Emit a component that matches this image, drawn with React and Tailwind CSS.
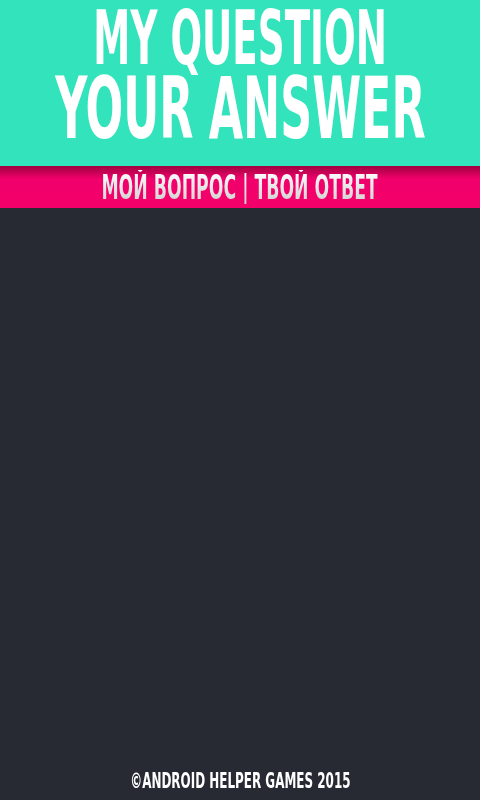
import React from 'react';

const condensed = { fontFamily: '"DejaVu Sans Condensed", "Liberation Sans", sans-serif' };

const App = () => {
  return (
    <div className="w-[480px] h-[800px] flex flex-col bg-[#272a33] overflow-hidden" style={condensed}>
      {/* title block */}
      <div className="h-[166px] bg-[#33e3bb] flex flex-col items-center text-white font-bold uppercase">
        <div className="text-[74px] leading-none mt-[1px] scale-x-[0.56] whitespace-nowrap">My Question</div>
        <div className="text-[85px] leading-none mt-[-9px] scale-x-[0.58] whitespace-nowrap">Your Answer</div>
      </div>

      {/* subtitle band */}
      <div className="h-[42px] bg-gradient-to-b from-[#a0003f] via-[#f0006b] via-30% to-[#f5006a] flex items-center justify-center">
        <span className="inline-block text-[34px] font-bold leading-none scale-x-[0.565] whitespace-nowrap bg-gradient-to-b from-white to-[#cfcfcf] bg-clip-text text-transparent">
          МОЙ ВОПРОС | ТВОЙ ОТВЕТ
        </span>
      </div>

      <div className="flex-1" />

      <div className="h-[30px] flex items-start justify-center">
        <span className="inline-block text-[22px] font-bold text-white leading-none scale-x-[0.604] whitespace-nowrap">
          ©ANDROID HELPER GAMES 2015
        </span>
      </div>
    </div>
  );
};

export default App;
